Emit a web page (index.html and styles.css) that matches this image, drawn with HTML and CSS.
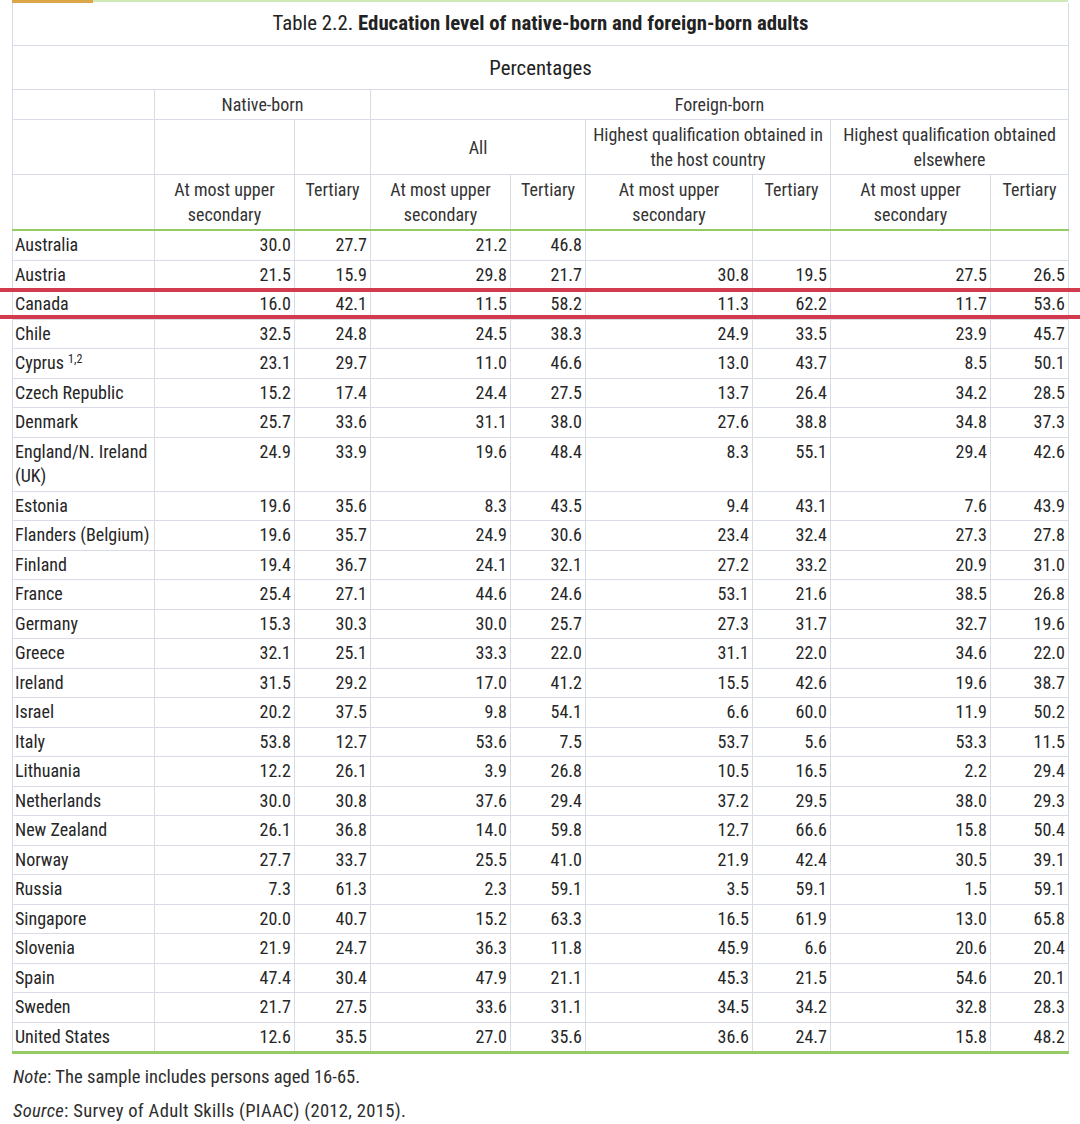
FILE: index.html
```html
<!DOCTYPE html>
<html>
<head>
<meta charset="utf-8">
<link rel="stylesheet" href="styles.css">
</head>
<body>
<div class="page">
  <div class="topbar"><div class="tab"></div><div class="rule"></div></div>
  <table class="tbl">
    <colgroup>
      <col class="c-country"><col class="c1"><col class="c2"><col class="c3"><col class="c4"><col class="c5"><col class="c6"><col class="c7"><col class="c8">
    </colgroup>
    <thead>
      <tr class="r-title"><th colspan="9">Table 2.2. <b>Education level of native-born and foreign-born adults</b></th></tr>
      <tr class="r-pct"><th colspan="9">Percentages</th></tr>
      <tr class="r-h1"><th></th><th colspan="2">Native-born</th><th colspan="6">Foreign-born</th></tr>
      <tr class="r-h2"><th></th><th></th><th></th><th colspan="2" class="mid">All</th><th colspan="2">Highest qualification obtained in the host country</th><th colspan="2">Highest qualification obtained elsewhere</th></tr>
      <tr class="r-h3"><th></th><th>At most upper secondary</th><th>Tertiary</th><th>At most upper secondary</th><th>Tertiary</th><th>At most upper secondary</th><th>Tertiary</th><th>At most upper secondary</th><th>Tertiary</th></tr>
    </thead>
    <tbody>
      <tr><td>Australia</td><td>30.0</td><td>27.7</td><td>21.2</td><td>46.8</td><td></td><td></td><td></td><td></td></tr>
      <tr><td>Austria</td><td>21.5</td><td>15.9</td><td>29.8</td><td>21.7</td><td>30.8</td><td>19.5</td><td>27.5</td><td>26.5</td></tr>
      <tr><td>Canada</td><td>16.0</td><td>42.1</td><td>11.5</td><td>58.2</td><td>11.3</td><td>62.2</td><td>11.7</td><td>53.6</td></tr>
      <tr><td>Chile</td><td>32.5</td><td>24.8</td><td>24.5</td><td>38.3</td><td>24.9</td><td>33.5</td><td>23.9</td><td>45.7</td></tr>
      <tr><td>Cyprus <sup>1,2</sup></td><td>23.1</td><td>29.7</td><td>11.0</td><td>46.6</td><td>13.0</td><td>43.7</td><td>8.5</td><td>50.1</td></tr>
      <tr><td>Czech Republic</td><td>15.2</td><td>17.4</td><td>24.4</td><td>27.5</td><td>13.7</td><td>26.4</td><td>34.2</td><td>28.5</td></tr>
      <tr><td>Denmark</td><td>25.7</td><td>33.6</td><td>31.1</td><td>38.0</td><td>27.6</td><td>38.8</td><td>34.8</td><td>37.3</td></tr>
      <tr><td>England/N. Ireland (UK)</td><td>24.9</td><td>33.9</td><td>19.6</td><td>48.4</td><td>8.3</td><td>55.1</td><td>29.4</td><td>42.6</td></tr>
      <tr><td>Estonia</td><td>19.6</td><td>35.6</td><td>8.3</td><td>43.5</td><td>9.4</td><td>43.1</td><td>7.6</td><td>43.9</td></tr>
      <tr><td>Flanders (Belgium)</td><td>19.6</td><td>35.7</td><td>24.9</td><td>30.6</td><td>23.4</td><td>32.4</td><td>27.3</td><td>27.8</td></tr>
      <tr><td>Finland</td><td>19.4</td><td>36.7</td><td>24.1</td><td>32.1</td><td>27.2</td><td>33.2</td><td>20.9</td><td>31.0</td></tr>
      <tr><td>France</td><td>25.4</td><td>27.1</td><td>44.6</td><td>24.6</td><td>53.1</td><td>21.6</td><td>38.5</td><td>26.8</td></tr>
      <tr><td>Germany</td><td>15.3</td><td>30.3</td><td>30.0</td><td>25.7</td><td>27.3</td><td>31.7</td><td>32.7</td><td>19.6</td></tr>
      <tr><td>Greece</td><td>32.1</td><td>25.1</td><td>33.3</td><td>22.0</td><td>31.1</td><td>22.0</td><td>34.6</td><td>22.0</td></tr>
      <tr><td>Ireland</td><td>31.5</td><td>29.2</td><td>17.0</td><td>41.2</td><td>15.5</td><td>42.6</td><td>19.6</td><td>38.7</td></tr>
      <tr><td>Israel</td><td>20.2</td><td>37.5</td><td>9.8</td><td>54.1</td><td>6.6</td><td>60.0</td><td>11.9</td><td>50.2</td></tr>
      <tr><td>Italy</td><td>53.8</td><td>12.7</td><td>53.6</td><td>7.5</td><td>53.7</td><td>5.6</td><td>53.3</td><td>11.5</td></tr>
      <tr><td>Lithuania</td><td>12.2</td><td>26.1</td><td>3.9</td><td>26.8</td><td>10.5</td><td>16.5</td><td>2.2</td><td>29.4</td></tr>
      <tr><td>Netherlands</td><td>30.0</td><td>30.8</td><td>37.6</td><td>29.4</td><td>37.2</td><td>29.5</td><td>38.0</td><td>29.3</td></tr>
      <tr><td>New Zealand</td><td>26.1</td><td>36.8</td><td>14.0</td><td>59.8</td><td>12.7</td><td>66.6</td><td>15.8</td><td>50.4</td></tr>
      <tr><td>Norway</td><td>27.7</td><td>33.7</td><td>25.5</td><td>41.0</td><td>21.9</td><td>42.4</td><td>30.5</td><td>39.1</td></tr>
      <tr><td>Russia</td><td>7.3</td><td>61.3</td><td>2.3</td><td>59.1</td><td>3.5</td><td>59.1</td><td>1.5</td><td>59.1</td></tr>
      <tr><td>Singapore</td><td>20.0</td><td>40.7</td><td>15.2</td><td>63.3</td><td>16.5</td><td>61.9</td><td>13.0</td><td>65.8</td></tr>
      <tr><td>Slovenia</td><td>21.9</td><td>24.7</td><td>36.3</td><td>11.8</td><td>45.9</td><td>6.6</td><td>20.6</td><td>20.4</td></tr>
      <tr><td>Spain</td><td>47.4</td><td>30.4</td><td>47.9</td><td>21.1</td><td>45.3</td><td>21.5</td><td>54.6</td><td>20.1</td></tr>
      <tr><td>Sweden</td><td>21.7</td><td>27.5</td><td>33.6</td><td>31.1</td><td>34.5</td><td>34.2</td><td>32.8</td><td>28.3</td></tr>
      <tr><td>United States</td><td>12.6</td><td>35.5</td><td>27.0</td><td>35.6</td><td>36.6</td><td>24.7</td><td>15.8</td><td>48.2</td></tr>
    </tbody>
  </table>
  <p class="note"><i>Note</i>: The sample includes persons aged 16-65.</p>
  <p class="note source"><i>Source</i>: Survey of Adult Skills (PIAAC) (2012, 2015).</p>
  <div class="mark mark-top"></div>
  <div class="mark mark-bottom"></div>
</div>
</body>
</html>
```

FILE: styles.css
```css
html, body {
  margin: 0;
  padding: 0;
  background: #ffffff;
}

body {
  font-family: "Roboto Condensed", "Liberation Sans Narrow", "DejaVu Sans Condensed", Roboto, sans-serif;
  color: #2a2a2a;
  width: 1080px;
  height: 1124px;
  overflow: hidden;
}

.page {
  position: relative;
  padding: 0 12px;
}

.topbar {
  display: flex;
  align-items: flex-start;
  height: 3px;
}

.topbar .tab {
  width: 81px;
  height: 3px;
  background: #dca548;
}

.topbar .rule {
  flex: 1;
  height: 2px;
  background: #cfe9b8;
}

.tbl {
  width: 1056px;
  border-collapse: collapse;
  table-layout: fixed;
  font-size: 18px;
}

.c-country { width: 142px; }
.c1 { width: 140px; }
.c2 { width: 76px; }
.c3 { width: 140px; }
.c4 { width: 75px; }
.c5 { width: 167px; }
.c6 { width: 78px; }
.c7 { width: 160px; }
.c8 { width: 78px; }

.tbl th,
.tbl td {
  border: 1px solid #d7dce6;
}

.tbl th {
  font-weight: normal;
  text-align: center;
  vertical-align: top;
  line-height: 25px;
  padding: 2px 3px 2px;
  color: #333333;
}

.tbl .r-title th {
  border-top: none;
  font-size: 20.8px;
  line-height: 24px;
  padding: 8px 4px 10px;
  color: #222222;
}

.tbl .r-title b {
  font-weight: bold;
}

.tbl .r-pct th {
  font-size: 20.8px;
  line-height: 24px;
  padding: 10px 4px 9px;
  color: #222222;
}

.tbl .r-h2 th.mid {
  vertical-align: middle;
}

.tbl .r-h3 th {
  border-bottom: 2px solid #95cb63;
}

.tbl td {
  line-height: 24.5px;
  padding: 2px 3px 2px;
  text-align: right;
  vertical-align: top;
  color: #262626;
}

.tbl td:first-child {
  text-align: left;
  padding-left: 2px;
}

.tbl tbody tr:last-child td {
  border-bottom: 3px solid #95cb63;
}

.tbl sup {
  font-size: 12px;
  line-height: 0;
  vertical-align: 6px;
}

.note {
  margin: 0;
  padding-left: 1px;
  font-size: 18.6px;
  line-height: 34px;
  color: #2e2e2e;
}

.note:first-of-type {
  margin-top: 6px;
}

.note.source {
  letter-spacing: 0.3px;
}

.mark {
  position: absolute;
  left: 0;
  width: 1080px;
  height: 4px;
  background: #d23a4e;
}

.mark-top { top: 288px; }
.mark-bottom { top: 315px; }
```
